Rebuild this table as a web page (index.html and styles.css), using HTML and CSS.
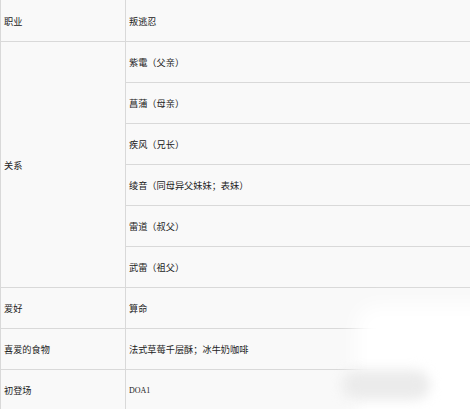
FILE: index.html
```html
<!DOCTYPE html>
<html lang="zh">
<head>
<meta charset="utf-8">
<title>角色资料</title>
<link rel="stylesheet" href="styles.css">
</head>
<body>
<div class="wrap">
<table class="info">
  <colgroup><col class="c1"><col class="c2"></colgroup>
  <tbody>
    <tr class="first"><td>职业</td><td>叛逃忍</td></tr>
    <tr><td rowspan="6" class="mid">关系</td><td>紫電（父亲）</td></tr>
    <tr><td>菖蒲（母亲）</td></tr>
    <tr><td>疾风（兄长）</td></tr>
    <tr><td>绫音（同母异父妹妹；表妹）</td></tr>
    <tr><td>雷道（叔父）</td></tr>
    <tr><td>武雷（祖父）</td></tr>
    <tr><td>爱好</td><td>算命</td></tr>
    <tr><td>喜爱的食物</td><td>法式草莓千层酥；冰牛奶咖啡</td></tr>
    <tr><td>初登场</td><td class="latin">DOA1</td></tr>
  </tbody>
</table>
<div class="fade"></div>
<div class="smudge"></div>
</div>
</body>
</html>
```
FILE: styles.css
```css
html, body {
  margin: 0;
  padding: 0;
  background: #ffffff;
}
.wrap {
  position: relative;
  width: 470px;
  height: 409px;
  overflow: hidden;
}
.info {
  border-collapse: collapse;
  width: 480px;
  margin: -1px 0 0 0;
  background: #f9f9f9;
  font-family: "Noto Sans CJK SC", "Noto Sans", sans-serif;
  font-size: 9.2px;
  color: #222222;
  table-layout: fixed;
}
.c1 { width: 125px; }
.info td {
  border: 1px solid #d9d9d9;
  padding: 0 3px;
  vertical-align: middle;
  white-space: nowrap;
  box-sizing: border-box;
  height: 41px;
}
.info .first td {
  height: 42px;
}
.latin {
  font-family: "Liberation Serif", serif;
  font-size: 8px;
}
.fade {
  position: absolute;
  left: 356px;
  top: 305px;
  width: 150px;
  height: 130px;
  background: #ffffff;
  border-radius: 20px;
  filter: blur(10px);
}
.smudge {
  position: absolute;
  left: 342px;
  top: 370px;
  width: 88px;
  height: 30px;
  border-radius: 15px;
  background: #ebebeb;
  filter: blur(6px);
}
```
